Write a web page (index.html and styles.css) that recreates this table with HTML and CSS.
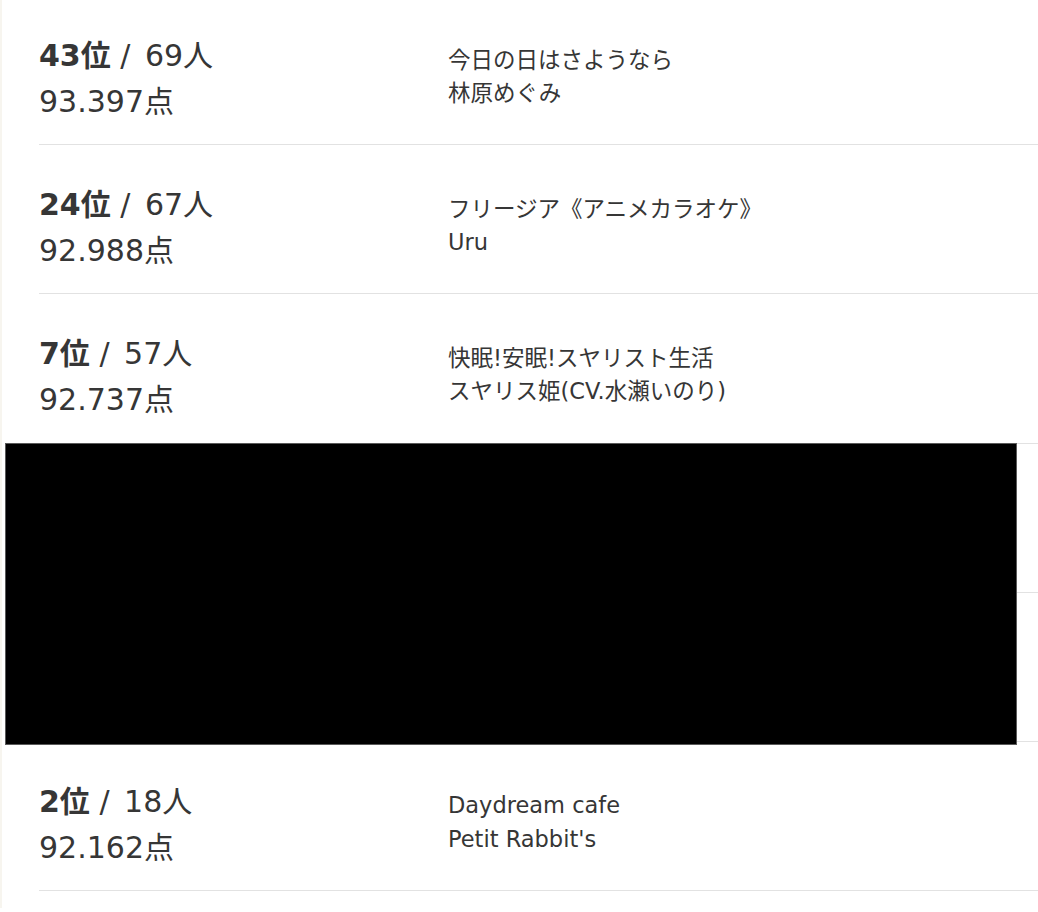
FILE: index.html
```html
<!DOCTYPE html>
<html lang="ja">
<head>
<meta charset="utf-8">
<title>ランキング</title>
<link rel="stylesheet" href="styles.css">
</head>
<body>
<div class="page">
  <ul class="list">
    <li class="row">
      <div class="rank">
        <div class="line"><b>43位</b> <span class="sep">/</span> 69人</div>
        <div class="line">93.397点</div>
      </div>
      <div class="song">
        <div class="line">今日の日はさようなら</div>
        <div class="line">林原めぐみ</div>
      </div>
    </li>
    <li class="row">
      <div class="rank">
        <div class="line"><b>24位</b> <span class="sep">/</span> 67人</div>
        <div class="line">92.988点</div>
      </div>
      <div class="song">
        <div class="line">フリージア《アニメカラオケ》</div>
        <div class="line">Uru</div>
      </div>
    </li>
    <li class="row">
      <div class="rank">
        <div class="line"><b>7位</b> <span class="sep">/</span> 57人</div>
        <div class="line">92.737点</div>
      </div>
      <div class="song">
        <div class="line">快眠!安眠!スヤリスト生活</div>
        <div class="line">スヤリス姫(CV.水瀬いのり)</div>
      </div>
    </li>
    <li class="row"></li>
    <li class="row"></li>
    <li class="row">
      <div class="rank">
        <div class="line"><b>2位</b> <span class="sep">/</span> 18人</div>
        <div class="line">92.162点</div>
      </div>
      <div class="song">
        <div class="line">Daydream cafe</div>
        <div class="line">Petit Rabbit's</div>
      </div>
    </li>
  </ul>
  <div class="redact"></div>
</div>
</body>
</html>
```

FILE: styles.css
```css
html, body {
  margin: 0;
  padding: 0;
  background: #ffffff;
}

body {
  font-family: "DejaVu Sans", "Noto Sans CJK JP", sans-serif;
  color: #363636;
  overflow: hidden;
}

.page {
  position: relative;
  min-height: 912px;
  border-left: 2px solid #f7f5ef;
}

.list {
  list-style: none;
  margin: -4px 0 0 37px;
  padding: 0;
}

.row {
  display: flex;
  height: 148.2px;
  border-bottom: 1px solid #e2e2e2;
}

.rank {
  width: 409px;
  padding-top: 37px;
  font-size: 30px;
  line-height: 46px;
}

.rank b {
  font-weight: 700;
}

.sep {
  margin-right: 5px;
}

.song {
  padding-top: 47.5px;
  font-size: 22.5px;
  line-height: 33.5px;
}

.line {
  white-space: nowrap;
}

.redact {
  position: absolute;
  left: 3px;
  top: 447px;
  width: 1010px;
  height: 300px;
  background: #000000;
  border: 1px solid #5a5a5a;
}
```
